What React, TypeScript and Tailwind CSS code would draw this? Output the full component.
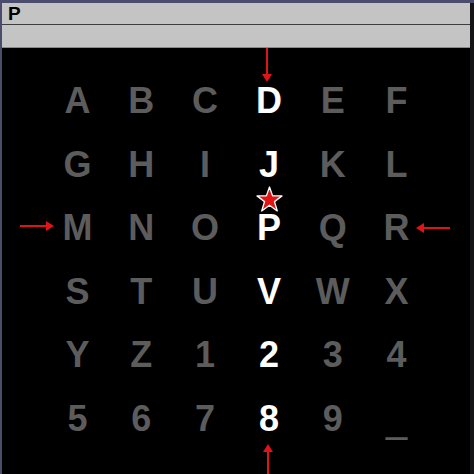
const CHARS = "ABCDEFGHIJKLMNOPQRSTUVWXYZ123456789_".split("");
const ACTIVE_COL = 3;

const Arrow = ({ dir, className }: { dir: "down" | "up" | "left" | "right"; className: string }) => {
  const rot = { down: 0, up: 180, left: 90, right: -90 }[dir];
  return (
    <svg viewBox="0 0 12 34" className={className} style={{ transform: `rotate(${rot}deg)` }}>
      <line x1="6" y1="0" x2="6" y2="28" stroke="#e01414" strokeWidth="2" />
      <polygon points="1,26 11,26 6,34" fill="#e01414" />
    </svg>
  );
};

const App = () => {
  return (
    <div className="w-[474px] h-[474px] flex flex-col bg-[#4b4b6e] pt-[3px] pl-[2px] font-['Liberation_Sans',Arial,sans-serif]">
      <div className="flex flex-1 min-h-0">
        <div className="flex flex-col flex-1">
          <div className="h-[22px] bg-[#c4c4c4] px-[6px] flex items-center text-[19px] font-bold text-black leading-none border-b border-[#3c3c3c]">
            P
          </div>
          <div className="h-[23px] bg-[#c4c4c4] border-b border-[#8a8a8a]" />
          <div className="relative flex-1 bg-black flex items-center justify-center">
            <div className="grid grid-cols-[repeat(6,63.8px)] grid-rows-[repeat(6,63.6px)] ml-[2px] mt-[-2px]">
              {CHARS.map((c, i) => (
                <div
                  key={c}
                  className={`flex items-center justify-center text-[36px] font-bold leading-none ${
                    i % 6 === ACTIVE_COL ? "text-white" : "text-[#5c5c5c]"
                  }`}
                >
                  {c === "_" ? (
                    <span className="translate-y-[4px] [-webkit-text-stroke:1.5px_#5c5c5c]">_</span>
                  ) : (
                    c
                  )}
                </div>
              ))}
            </div>
            <Arrow dir="down" className="absolute left-[259px] top-0 w-[12px] h-[34px]" />
            <Arrow dir="up" className="absolute left-[260px] top-[396px] w-[12px] h-[34px]" />
            <Arrow dir="right" className="absolute left-[29px] top-[161px] w-[12px] h-[34px]" />
            <Arrow dir="left" className="absolute left-[425px] top-[163px] w-[12px] h-[34px]" />
            <svg viewBox="0 0 26 25" className="absolute left-[254px] top-[138px] w-[27px] h-[26px]">
              <polygon
                points="13,1 16,9.5 25,9.5 17.8,15 20.5,24 13,18.5 5.5,24 8.2,15 1,9.5 10,9.5"
                fill="#e01414"
                stroke="#ffffff"
                strokeWidth="1.3"
                strokeLinejoin="round"
              />
            </svg>
          </div>
        </div>
        <div className="w-[4px] bg-[#141418]" />
      </div>
    </div>
  );
};

export default App;
